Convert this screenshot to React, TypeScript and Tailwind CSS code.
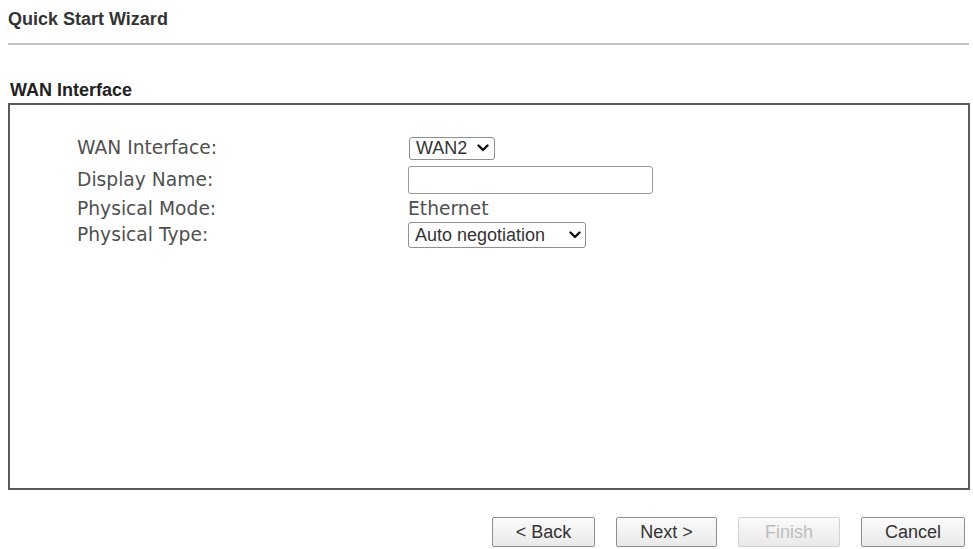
import { ReactNode } from 'react';

function Chevron() {
  return (
    <svg width="12" height="8" viewBox="0 0 12 8" className="shrink-0">
      <path d="M1.5 1.5 L6 6 L10.5 1.5" fill="none" stroke="#111" strokeWidth="2.4" strokeLinecap="round" strokeLinejoin="round" />
    </svg>
  );
}

function FakeSelect({ value, className }: { value: string; className: string }) {
  return (
    <div
      className={`${className} flex items-center justify-between pl-[6px] border border-[#8f8f8f] rounded-[3px] bg-white text-[18px] leading-none text-[#333] font-['Liberation_Sans',Arial,sans-serif]`}
    >
      <span>{value}</span>
      <Chevron />
    </div>
  );
}

function Row({ label, children, h }: { label: string; children: ReactNode; h: string }) {
  return (
    <div className={`flex items-center ${h}`}>
      <div className="w-[398px] pl-[67px] text-[18.7px] leading-[22px] text-[#505050] font-['DejaVu_Sans',Verdana,sans-serif]">
        {label}
      </div>
      <div className="flex items-center">{children}</div>
    </div>
  );
}

function WizButton({ label, width, disabled }: { label: string; width: string; disabled?: boolean }) {
  return (
    <button
      disabled={disabled}
      className={`${width} h-[30px] rounded-[2px] border bg-gradient-to-b from-[#fbfbfb] to-[#e9e9e9] text-[18px] leading-none font-['Liberation_Sans',Arial,sans-serif] ${
        disabled ? 'border-[#d2d2d2] text-[#bdbdbd]' : 'border-[#8e8e8e] text-[#333]'
      }`}
    >
      {label}
    </button>
  );
}

export default function App() {
  return (
    <div className="w-[973px] h-[549px] bg-white px-[8px] pt-[9px] font-['Liberation_Sans',Arial,sans-serif]">
      {/* Header */}
      <h1 className="text-[18px] leading-[20px] font-bold text-[#333]">Quick Start Wizard</h1>
      <div className="mt-[14px] w-[961px] h-[2px] bg-[#c4c4c4]" />

      <h2 className="mt-[35px] text-[18px] leading-[20px] font-bold text-[#222] pl-[2px]">WAN Interface</h2>

      {/* Panel */}
      <div className="mt-[3px] w-[962px] h-[387px] border-2 border-[#5a5a5a] pt-[28px]">
        <Row label="WAN Interface:" h="h-[30px]">
          <div className="pl-[1px]">
            <FakeSelect value="WAN2" className="w-[86px] h-[23px] pr-[5px]" />
          </div>
        </Row>
        <Row label="Display Name:" h="h-[34px]">
          <div className="w-[245px] h-[28px] border border-[#9a9a9a] rounded-[3px] bg-white" />
        </Row>
        <Row label="Physical Mode:" h="h-[24px]">
          <span className="text-[18.7px] leading-[22px] text-[#505050] font-['DejaVu_Sans',Verdana,sans-serif]">Ethernet</span>
        </Row>
        <Row label="Physical Type:" h="h-[28px]">
          <FakeSelect value="Auto negotiation" className="w-[178px] h-[26px] pr-[4px]" />
        </Row>
      </div>

      {/* Buttons */}
      <div className="mt-[27px] w-[962px] flex justify-end gap-[21px] pr-[5px]">
        <WizButton label="< Back" width="w-[103px]" />
        <WizButton label="Next >" width="w-[101px]" />
        <WizButton label="Finish" width="w-[102px]" disabled />
        <WizButton label="Cancel" width="w-[104px]" />
      </div>
    </div>
  );
}
